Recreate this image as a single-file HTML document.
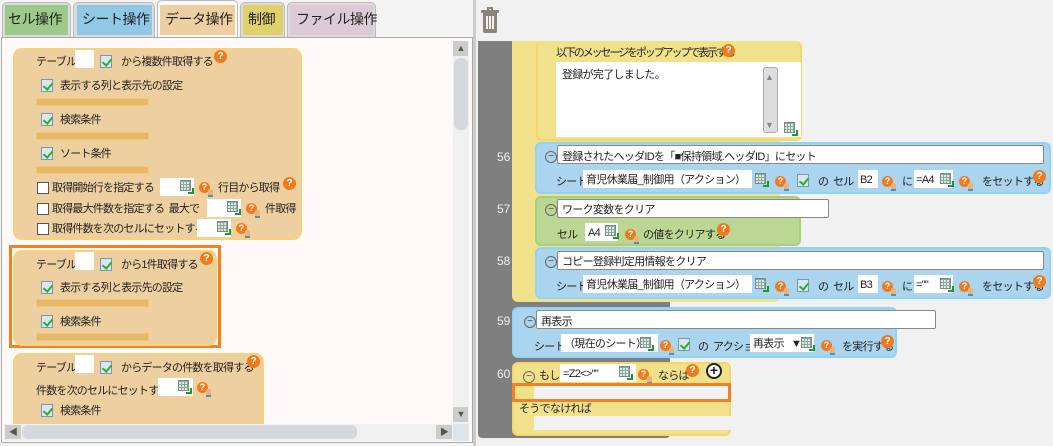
<!DOCTYPE html>
<html><head><meta charset="utf-8"><style>
*{margin:0;padding:0;box-sizing:border-box}
body{width:1053px;height:446px;overflow:hidden;background:#f1f1f1;font-family:"Liberation Sans","Noto Sans CJK JP",sans-serif;font-size:11px;letter-spacing:-0.8px;color:#222;position:relative}
div,span{position:absolute}
.t{white-space:nowrap;line-height:14px}
.r{letter-spacing:-0.7px}
.h{width:13px;height:13px;border-radius:50%;background:#f07a1c;color:#fff;font-weight:bold;font-size:10px;line-height:13px;text-align:center;letter-spacing:0}
.h:after{content:"";position:absolute;left:1px;bottom:-2px;border:3px solid transparent;border-top-color:#f07a1c;transform:rotate(20deg)}
.hq{width:11px;height:11px;border-radius:50%;background:#f07a1c;color:#fff;font-weight:bold;font-size:9px;line-height:11px;text-align:center;letter-spacing:0}
.hq:after{content:"";position:absolute;left:9px;top:7px;width:5px;height:6px;border-radius:2px 2px 0 0;background:#e9b47a;border-bottom:2px solid #4a90c8}
.g{width:11px;height:11px;border:1px solid #789;background:repeating-linear-gradient(90deg,transparent 0 2px,#8a9 2px 3px),repeating-linear-gradient(0deg,#dfe9dc 0 2px,#8a9 2px 3px)}
.g:after{content:"";position:absolute;right:-4px;bottom:-4px;width:4px;height:4px;border-right:2px solid #1a9a2a;border-bottom:2px solid #1a9a2a}
.e{width:12px;height:13px;border:1px solid #7c97ad;background:#dbe7ef}
.e:after{content:"";position:absolute;left:3px;top:1px;width:4px;height:7px;border-right:2px solid #25b030;border-bottom:2px solid #25b030;transform:rotate(40deg)}
.in{background:#fff;height:18px}
.cb{width:12px;height:12px;border:1px solid #555;background:#fff}
.bar{height:8px;background:#e6b86c;border:1px solid #f2c870}
.blk{background:#eecfa0;border:2px solid #f7d27a;border-radius:9px}
.y{background:#f2e18b;border-radius:6px}
.bl{background:#abd4ee;border:2px solid #8fd4f8;border-radius:6px}
.gr{background:#bcd793;border:2px solid #a6cf7c;border-radius:6px}
.box{background:#fff;border:1px solid #888;height:19px;border-radius:2px}
.mn{width:12px;height:12px;border:1px solid #666;border-radius:50%;font-size:10px;line-height:9px;text-align:center;color:#444;letter-spacing:0}
.ln{color:#eee;font-size:12px;letter-spacing:0}
.tab{font-size:14px;letter-spacing:-0.5px}
</style></head><body>
<div style="left:0;top:0;width:476px;height:446px;background:#f4f4f4"></div>
<div style="left:2px;top:2px;width:69px;height:35px;background:#dcdcdc;border:1px solid #bbb;border-bottom:none;border-radius:5px 5px 0 0"><span style="left:2px;top:2px;width:63px;height:30px;background:#9dc98b"></span><span class="t tab" style="left:5px;top:9px">セル操作</span></div>
<div style="left:73px;top:2px;width:82px;height:35px;background:#dcdcdc;border:1px solid #bbb;border-bottom:none;border-radius:5px 5px 0 0"><span style="left:3px;top:2px;width:75px;height:30px;background:#91c8e6"></span><span class="t tab" style="left:8px;top:9px">シート操作</span></div>
<div style="left:157px;top:0px;width:81px;height:38px;background:#fdf9f8;border:1px solid #bbb;border-bottom:none;border-radius:5px 5px 0 0"><span style="left:2px;top:4px;width:75px;height:30px;background:#edcfa2"></span><span class="t tab" style="left:7px;top:11px">データ操作</span></div>
<div style="left:240px;top:2px;width:45px;height:35px;background:#dcdcdc;border:1px solid #bbb;border-bottom:none;border-radius:5px 5px 0 0"><span style="left:2px;top:2px;width:40px;height:30px;background:#dfd06a"></span><span class="t tab" style="left:7px;top:9px">制御</span></div>
<div style="left:287px;top:2px;width:89px;height:35px;background:#dcdcdc;border:1px solid #bbb;border-bottom:none;border-radius:5px 5px 0 0"><span style="left:2px;top:2px;width:83px;height:30px;background:#dccad6"></span><span class="t tab" style="left:8px;top:9px">ファイル操作</span></div>
<div style="left:1px;top:37px;width:472px;height:406px;background:#fdf9f8;border:1px solid #aaa"></div>
<div style="left:453px;top:41px;width:16px;height:383px;background:#f0f0f0"></div>
<div style="left:453px;top:41px;width:15px;height:15px;background:#ccc;color:#554;font-size:9px;text-align:center;line-height:15px">▲</div>
<div style="left:454px;top:58px;width:14px;height:72px;background:#d5d8dc;border-radius:6px"></div>
<div style="left:453px;top:407px;width:15px;height:15px;background:#ccc;color:#554;font-size:9px;text-align:center;line-height:15px">▼</div>
<div style="left:473px;top:0;width:3px;height:446px;background:#ccc"></div>

<div class="blk" style="left:13px;top:48px;width:289px;height:192px"></div>
<span class="t" style="left:36px;top:55px">テーブル</span><span class="in" style="left:75px;top:50px;width:19px"></span><span class="e" style="left:100px;top:55px"></span><span class="t" style="left:121px;top:55px">から複数件取得する</span><span class="h" style="left:214px;top:50px">?</span>
<span class="e" style="left:41px;top:79px"></span><span class="t" style="left:60px;top:79px">表示する列と表示先の設定</span><span class="bar" style="left:36px;top:98px;width:113px"></span>
<span class="e" style="left:41px;top:113px"></span><span class="t" style="left:60px;top:113px">検索条件</span><span class="bar" style="left:36px;top:132px;width:113px"></span>
<span class="e" style="left:41px;top:147px"></span><span class="t" style="left:60px;top:147px">ソート条件</span><span class="bar" style="left:36px;top:166px;width:113px"></span>
<span class="cb" style="left:37px;top:182px"></span><span class="t" style="left:52px;top:181px">取得開始行を指定する</span><span class="in" style="left:160px;top:178px;width:34px"></span><span class="g" style="left:180px;top:180px"></span><span class="hq" style="left:199px;top:182px">?</span><span class="t" style="left:218px;top:181px">行目から取得</span><span class="h" style="left:283px;top:177px">?</span>
<span class="cb" style="left:37px;top:203px"></span><span class="t" style="left:52px;top:202px">取得最大件数を指定する&nbsp;&nbsp;最大で</span><span class="in" style="left:207px;top:199px;width:34px"></span><span class="g" style="left:227px;top:201px"></span><span class="hq" style="left:246px;top:203px">?</span><span class="t" style="left:265px;top:202px">件取得</span>
<span class="cb" style="left:37px;top:223px"></span><span class="t" style="left:52px;top:222px">取得件数を次のセルにセットする</span><span class="in" style="left:197px;top:219px;width:34px"></span><span class="g" style="left:217px;top:221px"></span><span class="hq" style="left:236px;top:223px">?</span>

<div style="left:9px;top:245px;width:212px;height:103px;border:3px solid #f7801e"></div>
<div class="blk" style="left:13px;top:250px;width:204px;height:96px"></div>
<span class="t" style="left:36px;top:258px">テーブル</span><span class="in" style="left:75px;top:252px;width:19px"></span><span class="e" style="left:100px;top:258px"></span><span class="t" style="left:121px;top:258px">から1件取得する</span><span class="h" style="left:200px;top:252px">?</span>
<span class="e" style="left:41px;top:281px"></span><span class="t" style="left:60px;top:281px">表示する列と表示先の設定</span><span class="bar" style="left:36px;top:299px;width:113px"></span>
<span class="e" style="left:41px;top:315px"></span><span class="t" style="left:60px;top:315px">検索条件</span><span class="bar" style="left:36px;top:333px;width:113px"></span>

<div class="blk" style="left:13px;top:353px;width:251px;height:80px"></div>
<span class="t" style="left:36px;top:361px">テーブル</span><span class="in" style="left:75px;top:355px;width:19px"></span><span class="e" style="left:100px;top:361px"></span><span class="t" style="left:121px;top:361px">からデータの件数を取得する</span><span class="h" style="left:247px;top:355px">?</span>
<span class="t" style="left:36px;top:384px">件数を次のセルにセットする</span><span class="in" style="left:158px;top:378px;width:35px"></span><span class="g" style="left:178px;top:380px"></span><span class="hq" style="left:197px;top:382px">?</span>
<span class="e" style="left:41px;top:404px"></span><span class="t" style="left:60px;top:404px">検索条件</span>
<div style="left:4px;top:424px;width:449px;height:17px;background:#f0f0f0"></div>
<div style="left:5px;top:425px;width:16px;height:14px;background:#ccc;color:#554;font-size:9px;text-align:center;line-height:14px">◀</div>
<div style="left:22px;top:425px;width:335px;height:14px;background:#d5d8dc;border-radius:6px"></div>
<div style="left:436px;top:425px;width:16px;height:14px;background:#ccc;color:#554;font-size:9px;text-align:center;line-height:14px">▶</div>
<div style="left:453px;top:424px;width:16px;height:17px;background:#dde4ea"></div>

<div style="left:483px;top:13px;width:14px;height:20px;background:#8b8478;border-radius:0 0 2px 2px"></div>
<div style="left:481px;top:10px;width:18px;height:3px;background:#8b8478;border-radius:1px"></div>
<div style="left:487px;top:7px;width:6px;height:3px;border:2px solid #8b8478;border-bottom:none"></div>
<div style="left:486px;top:16px;width:2px;height:13px;background:#f1f1f1"></div><div style="left:489px;top:16px;width:2px;height:13px;background:#f1f1f1"></div><div style="left:492px;top:16px;width:2px;height:13px;background:#f1f1f1"></div>

<div style="left:478px;top:41px;width:192px;height:397px;background:#7f7f7f;border-radius:0 0 4px 4px"></div>
<div style="left:512px;top:41px;width:268px;height:261px;background:#f2e18b;border-radius:0 0 6px 6px"></div>
<div class="y" style="left:536px;top:41px;width:266px;height:100px;border:2px solid #f3d76a;border-top:none"></div>
<span class="t" style="left:556px;top:46px;letter-spacing:-2.1px">以下のメッセージをポップアップで表示する</span><span class="h" style="left:722px;top:44px">?</span>
<div style="left:556px;top:62px;width:245px;height:75px;background:#fff"></div>
<span class="t r" style="left:562px;top:68px">登録が完了しました。</span>
<div style="left:763px;top:67px;width:15px;height:66px;background:#ddd;border:1px solid #aaa;border-radius:3px"></div>
<span class="t" style="left:765px;top:70px;font-size:9px;color:#888">▲</span><span class="t" style="left:765px;top:118px;font-size:9px;color:#888">▼</span>
<span class="g" style="left:784px;top:122px"></span>

<span class="ln t" style="left:497px;top:150px">56</span>
<div class="bl" style="left:535px;top:142px;width:516px;height:52px"></div>
<span class="mn" style="left:545px;top:151px">−</span><div class="box" style="left:557px;top:145px;width:487px"></div><span class="t r" style="left:562px;top:150px">登録されたヘッダIDを「■保持領域.ヘッダID」にセット</span>
<span class="t r" style="left:556px;top:175px">シート</span><span class="in" style="left:583px;top:170px;width:169px"></span><span class="t r" style="left:586px;top:173px">育児休業届_制御用（アクション）</span><span class="g" style="left:755px;top:173px"></span><span class="hq" style="left:775px;top:176px">?</span><span class="e" style="left:797px;top:174px"></span><span class="t r" style="left:818px;top:175px">の&nbsp;&nbsp;セル</span><span class="in" style="left:858px;top:170px;width:20px"></span><span class="t r" style="left:860px;top:173px">B2</span><span class="hq" style="left:882px;top:176px">?</span><span class="t r" style="left:902px;top:175px">に</span><span class="in" style="left:914px;top:170px;width:39px"></span><span class="t r" style="left:916px;top:173px">=A4</span><span class="g" style="left:940px;top:173px"></span><span class="hq" style="left:959px;top:176px">?</span><span class="t r" style="left:982px;top:175px">をセットする</span><span class="h" style="left:1033px;top:170px">?</span>

<span class="ln t" style="left:497px;top:202px">57</span>
<div class="gr" style="left:535px;top:196px;width:266px;height:50px"></div>
<span class="mn" style="left:545px;top:204px">−</span><div class="box" style="left:557px;top:199px;width:272px"></div><span class="t r" style="left:562px;top:203px">ワーク変数をクリア</span>
<span class="t r" style="left:557px;top:228px">セル</span><span class="in" style="left:585px;top:223px;width:33px"></span><span class="t r" style="left:588px;top:226px">A4</span><span class="g" style="left:605px;top:225px"></span><span class="hq" style="left:625px;top:229px">?</span><span class="t r" style="left:643px;top:228px">の値をクリアする</span><span class="h" style="left:717px;top:223px">?</span>

<span class="ln t" style="left:497px;top:254px">58</span>
<div class="bl" style="left:535px;top:247px;width:516px;height:52px"></div>
<span class="mn" style="left:545px;top:256px">−</span><div class="box" style="left:557px;top:251px;width:487px"></div><span class="t r" style="left:562px;top:255px">コピー登録判定用情報をクリア</span>
<span class="t r" style="left:556px;top:280px">シート</span><span class="in" style="left:583px;top:275px;width:169px"></span><span class="t r" style="left:586px;top:278px">育児休業届_制御用（アクション）</span><span class="g" style="left:755px;top:278px"></span><span class="hq" style="left:775px;top:281px">?</span><span class="e" style="left:797px;top:279px"></span><span class="t r" style="left:818px;top:280px">の&nbsp;&nbsp;セル</span><span class="in" style="left:858px;top:275px;width:20px"></span><span class="t r" style="left:860px;top:278px">B3</span><span class="hq" style="left:882px;top:281px">?</span><span class="t r" style="left:902px;top:280px">に</span><span class="in" style="left:914px;top:275px;width:39px"></span><span class="t r" style="left:916px;top:278px">=""</span><span class="g" style="left:940px;top:278px"></span><span class="hq" style="left:959px;top:281px">?</span><span class="t r" style="left:982px;top:280px">をセットする</span><span class="h" style="left:1033px;top:275px">?</span>

<span class="ln t" style="left:497px;top:314px">59</span>
<div class="bl" style="left:512px;top:307px;width:385px;height:51px"></div>
<span class="mn" style="left:524px;top:316px">−</span><div class="box" style="left:536px;top:310px;width:400px"></div><span class="t r" style="left:541px;top:315px">再表示</span>
<span class="t r" style="left:534px;top:340px">シート</span><span class="in" style="left:561px;top:334px;width:97px"></span><span class="t r" style="left:564px;top:337px">（現在のシート）</span><span class="g" style="left:640px;top:337px"></span><span class="hq" style="left:660px;top:340px">?</span><span class="e" style="left:678px;top:338px"></span><span class="t r" style="left:698px;top:340px">の&nbsp;&nbsp;アクション</span><span class="in" style="left:750px;top:334px;width:64px"></span><span class="t r" style="left:753px;top:337px">再表示&nbsp;&nbsp;&nbsp;▼</span><span class="g" style="left:801px;top:337px"></span><span class="hq" style="left:821px;top:340px">?</span><span class="t r" style="left:842px;top:340px">を実行する</span><span class="h" style="left:881px;top:335px">?</span>

<span class="ln t" style="left:497px;top:367px">60</span>
<div class="y" style="left:512px;top:362px;width:219px;height:74px;border:2px solid #f3d76a"></div>
<span class="mn" style="left:523px;top:371px">−</span><span class="t r" style="left:539px;top:369px">もし</span><span class="in" style="left:560px;top:364px;width:76px"></span><span class="t r" style="left:563px;top:367px">=Z2&lt;&gt;""</span><span class="g" style="left:619px;top:366px"></span><span class="hq" style="left:638px;top:369px">?</span><span class="t r" style="left:658px;top:369px">ならば</span><span class="h" style="left:686px;top:364px">?</span>
<span style="left:706px;top:363px;width:16px;height:16px;border:2px solid #222;border-radius:50%;background:#fff;font-weight:bold;font-size:14px;line-height:11px;text-align:center;letter-spacing:0">+</span>
<div style="left:534px;top:386px;width:197px;height:14px;background:#f1f1f1"></div>
<div style="left:512px;top:383px;width:219px;height:19px;border:3px solid #f7801e"></div>
<span class="t r" style="left:519px;top:402px">そうでなければ</span>
<div style="left:534px;top:416px;width:197px;height:14px;background:#f1f1f1"></div>
</body></html>
